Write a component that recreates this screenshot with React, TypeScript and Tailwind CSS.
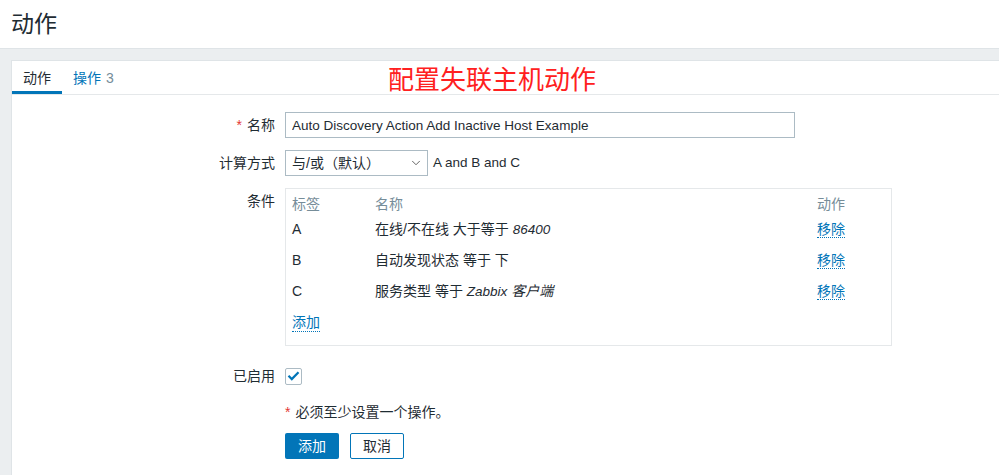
import { ChevronDown } from 'lucide-react'

const FONT = "font-['Liberation_Sans','Noto_Sans_CJK_SC',sans-serif]"

const CONDITIONS = [
  { label: 'A', parts: ['在线/不在线 大于等于 ', <i key="v" className="text-[13.5px]">86400</i>] },
  { label: 'B', parts: ['自动发现状态 等于 ', <span key="v">下</span>] },
  { label: 'C', parts: ['服务类型 等于 ', <i key="v"><span className="text-[13.5px]">Zabbix</span> 客户端</i>] },
]

function Label({ children, required }: { children: React.ReactNode; required?: boolean }) {
  return (
    <div className="flex h-[26px] items-center justify-end text-[14px] text-[#1f2c33]">
      {required && <span className="mr-[5px] text-[#e33734]">*</span>}
      {children}
    </div>
  )
}

function DottedLink({ children }: { children: React.ReactNode }) {
  return (
    <span className="border-b border-dotted border-[#0275b8] leading-[17px] text-[#0275b8]">
      {children}
    </span>
  )
}

export default function App() {
  return (
    <div className={`${FONT} h-[475px] w-[999px] overflow-hidden bg-[#ebeef0] text-[14px] text-[#1f2c33]`}>
      {/* Header */}
      <div className="flex h-[49px] items-center border-b border-[#dfe4e7] bg-white pl-[11px]">
        <h1 className="text-[23px] leading-none text-[#1f2c33]">动作</h1>
      </div>

      {/* Panel */}
      <div className="relative ml-[11px] mt-[11px] h-[500px] border-l border-t border-[#dfe4e7] bg-white">
        {/* Tabs */}
        <div className="flex h-[34px] border-b border-[#e5e8ea]">
          <div className="flex items-center border-b-[3px] border-[#0275b8] px-[11px] pt-[3px] leading-none">
            动作
          </div>
          <div className="flex items-center px-[11px] leading-none text-[#0275b8]">
            操作 <span className="ml-[5px] text-[#768d99]">3</span>
          </div>
        </div>

        <div className="pointer-events-none absolute left-[376px] top-[6px] text-[26px] leading-none text-[#ff2020]">
          配置失联主机动作
        </div>

        {/* Form */}
        <div className="grid grid-cols-[263px_1fr] gap-x-[10px] pt-[17px]">
          <Label required>名称</Label>
          <div>
            <input
              readOnly
              value="Auto Discovery Action Add Inactive Host Example"
              className="h-[26px] w-[510px] border border-[#acbbc4] px-[6px] text-[13.5px] text-[#1f2c33] outline-none"
            />
          </div>

          <div className="col-span-2 h-[12px]" />

          <Label>计算方式</Label>
          <div className="flex items-center">
            <div className="flex h-[26px] w-[143px] items-center justify-between border border-[#acbbc4] pl-[6px] pr-[4px]">
              <span>与/或（默认）</span>
              <ChevronDown size={14} strokeWidth={1.5} className="text-[#4f4f4f]" />
            </div>
            <span className="ml-[5px] text-[13.5px]">A and B and C</span>
          </div>

          <div className="col-span-2 h-[12px]" />

          <Label>条件</Label>
          <div>
            <div className="w-[607px] border border-[#e5e8ea] px-[6px] pb-[6px] pt-[5px]">
              <div className="grid h-[20px] grid-cols-[83px_442px_1fr] items-center text-[#768d99]">
                <span>标签</span>
                <span>名称</span>
                <span>动作</span>
              </div>
              {CONDITIONS.map((c) => (
                <div key={c.label} className="grid h-[31px] grid-cols-[83px_442px_1fr] items-center">
                  <span>{c.label}</span>
                  <span>{c.parts}</span>
                  <span>
                    <DottedLink>移除</DottedLink>
                  </span>
                </div>
              ))}
              <div className="flex h-[32px] items-center">
                <DottedLink>添加</DottedLink>
              </div>
            </div>
          </div>

          <div className="col-span-2 h-[17px]" />

          <Label>已启用</Label>
          <div className="flex h-[26px] items-center">
            <div className="flex h-[17px] w-[17px] items-center justify-center rounded-[2px] border border-[#acbbc4]">
              <svg width="13" height="10" viewBox="0 0 13 10" fill="none">
                <path d="M1.5 4.8l3.3 3.3 6.7-6.8" stroke="#0275b8" strokeWidth="2.2" />
              </svg>
            </div>
          </div>

          <div className="col-span-2 h-[14px]" />

          <div />
          <div className="flex h-[18px] items-center">
            <span className="mr-[5px] text-[#e33734]">*</span>
            必须至少设置一个操作。
          </div>

          <div className="col-span-2 h-[12px]" />

          <div />
          <div className="flex gap-[11px]">
            <button className="h-[26px] w-[54px] rounded-[2px] bg-[#0275b8] text-[14px] text-white">
              添加
            </button>
            <button className="h-[26px] w-[54px] rounded-[2px] border border-[#0275b8] bg-white text-[14px] text-[#1f2c33]">
              取消
            </button>
          </div>
        </div>
      </div>
    </div>
  )
}
